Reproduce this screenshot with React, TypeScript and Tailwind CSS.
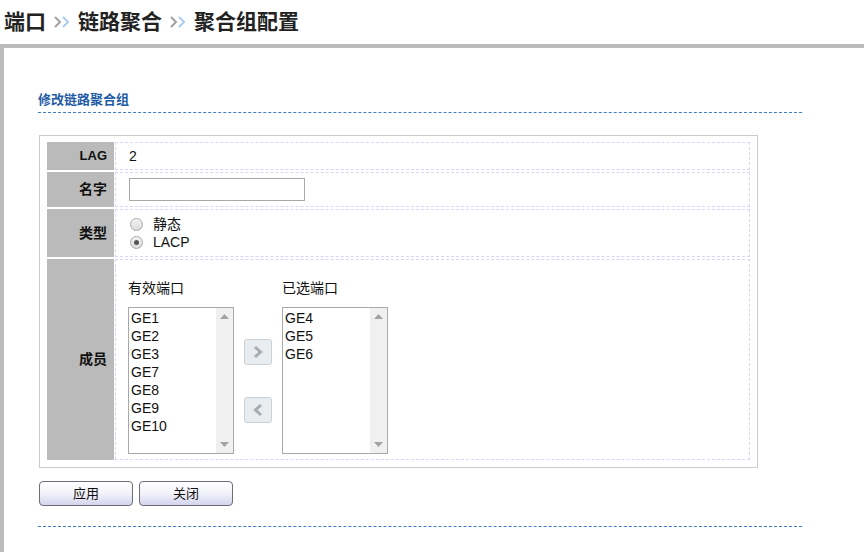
import React from "react";

const CJK = { fontFamily: '"Liberation Sans", "Noto Sans CJK SC", Arial, sans-serif' };

function Crumb() {
  return (
    <svg width="24" height="16" viewBox="0 0 24 16" className="mx-[4px]">
      <polyline points="5,3 10,8 5,13" fill="none" stroke="#a0a0a0" strokeWidth="2" />
      <polyline points="13,3 18,8 13,13" fill="none" stroke="#a8cdf0" strokeWidth="2" />
    </svg>
  );
}

function Radio({ checked }: { checked?: boolean }) {
  return (
    <span className="inline-flex h-[13px] w-[13px] items-center justify-center rounded-full border border-[#a8a8a8] bg-gradient-to-b from-[#f4f4f4] to-[#dcdcdc]">
      {checked && <span className="h-[5px] w-[5px] rounded-full bg-[#555]" />}
    </span>
  );
}

function ListBox({ items }: { items: string[] }) {
  return (
    <div className="flex h-[147px] w-[106px] border border-[#a9a9a9] bg-white">
      <div className="flex-1 pl-[2px] pt-[1px] text-[14px] leading-[18px] text-[#111]">
        {items.map((i) => (
          <div key={i}>{i}</div>
        ))}
      </div>
      <div className="flex w-[17px] flex-col items-center justify-between bg-[#f0f0f0] py-[6px]">
        <svg width="9" height="5" viewBox="0 0 9 5">
          <polygon points="0,5 4.5,0 9,5" fill="#a3a3a3" />
        </svg>
        <svg width="9" height="5" viewBox="0 0 9 5">
          <polygon points="0,0 4.5,5 9,0" fill="#a3a3a3" />
        </svg>
      </div>
    </div>
  );
}

function ArrowBtn({ dir }: { dir: "right" | "left" }) {
  return (
    <div className="flex h-[26px] w-[28px] items-center justify-center rounded-[3px] border border-[#c9d0d6] bg-[#e9edf0]">
      <svg width="12" height="14" viewBox="0 0 12 14">
        {dir === "right" ? (
          <polyline points="3,2 8.5,7 3,12" fill="none" stroke="#a5acb3" strokeWidth="3" />
        ) : (
          <polyline points="9,2 3.5,7 9,12" fill="none" stroke="#a5acb3" strokeWidth="3" />
        )}
      </svg>
    </div>
  );
}

function Btn({ label }: { label: string }) {
  return (
    <button className="h-[25px] w-[94px] rounded-[4px] border border-[#6d6d7a] bg-gradient-to-b from-white via-[#f2f2fa] to-[#d4d4ee] text-[13px] text-[#111]">
      {label}
    </button>
  );
}

function Row({ label, h, children, latin }: { label: string; h: number; children: React.ReactNode; latin?: boolean }) {
  return (
    <div className="flex gap-[1px]" style={{ height: h }}>
      <div
        className={`flex w-[67px] shrink-0 items-center justify-end bg-[#bababa] pr-[7px] font-bold text-[#111] ${latin ? "text-[13px]" : "text-[14px]"}`}
      >
        {label}
      </div>
      <div className="flex flex-1 items-center border border-dashed border-[#d6d6fb] pl-[13px] text-[14px] text-[#111]">
        {children}
      </div>
    </div>
  );
}

export default function App() {
  return (
    <div className="h-[552px] w-[864px] overflow-hidden bg-white" style={CJK}>
      <div className="flex h-[44px] items-center pl-[4px] text-[21px] font-bold text-[#222]">
        <span>端口</span>
        <Crumb />
        <span>链路聚合</span>
        <Crumb />
        <span>聚合组配置</span>
      </div>
      <div className="h-[508px] border-l-[4px] border-t-[4px] border-[#bcbcbc] pl-[34px] pt-[44px]">
        <div className="w-[764px]">
          <div className="border-b border-dashed border-[#3f7cc4] pb-[4px] text-[13px] font-bold leading-[16px] text-[#1f5ca6]">
            修改链路聚合组
          </div>
        </div>
        <div className="ml-[1px] mt-[22px] w-[719px] border border-[#cccccc] px-[7px] pb-[7px] pt-[6px]">
          <div className="flex flex-col gap-[2px]">
            <Row label="LAG" h={28} latin>
              <span>2</span>
            </Row>
            <Row label="名字" h={35}>
              <div className="h-[23px] w-[176px] border border-[#a9a9a9] bg-white" />
            </Row>
            <Row label="类型" h={48}>
              <div className="flex flex-col gap-[2px] pl-[1px]">
                <div className="flex h-[16px] items-center gap-[10px]">
                  <Radio />
                  <span>静态</span>
                </div>
                <div className="flex h-[16px] items-center gap-[10px]">
                  <Radio checked />
                  <span>LACP</span>
                </div>
              </div>
            </Row>
            <div className="flex h-[201px] gap-[1px]">
              <div className="flex w-[67px] shrink-0 items-center justify-end bg-[#bababa] pr-[7px] text-[14px] font-bold text-[#111]">
                成员
              </div>
              <div className="flex flex-1 items-start gap-[10px] border border-dashed border-[#d6d6fb] pl-[12px] pt-[19px] text-[14px] text-[#111]">
                <div className="flex flex-col gap-[10px]">
                  <div className="leading-[18px]">有效端口</div>
                  <ListBox items={["GE1", "GE2", "GE3", "GE7", "GE8", "GE9", "GE10"]} />
                </div>
                <div className="flex flex-col gap-[32px] pt-[60px]">
                  <ArrowBtn dir="right" />
                  <ArrowBtn dir="left" />
                </div>
                <div className="flex flex-col gap-[10px]">
                  <div className="leading-[18px]">已选端口</div>
                  <ListBox items={["GE4", "GE5", "GE6"]} />
                </div>
              </div>
            </div>
          </div>
        </div>
        <div className="ml-[1px] mt-[13px] flex gap-[6px]">
          <Btn label="应用" />
          <Btn label="关闭" />
        </div>
        <div className="mt-[20px] w-[764px] border-b border-dashed border-[#3f7cc4]" />
      </div>
    </div>
  );
}
